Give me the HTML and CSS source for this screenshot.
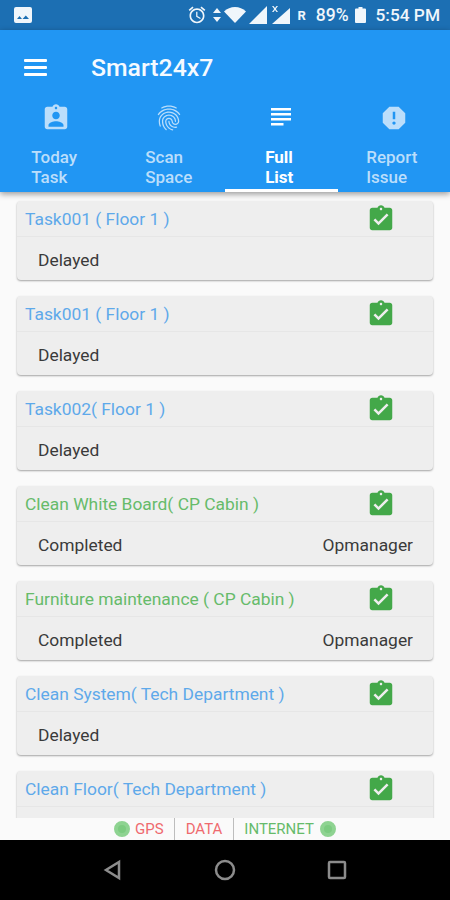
FILE: index.html
```html
<!DOCTYPE html>
<html lang="en">
<head>
    <meta charset="UTF-8">
    <meta name="viewport" content="width=device-width, initial-scale=1.0">
    <title>Smart24x7</title>
    <link rel="stylesheet" href="styles.css">
</head>
<body>
    <svg class="defs" width="0" height="0">
        <symbol id="task-done" viewBox="0 0 24 24">
            <path d="M19 3h-4.180C14.400 1.840 13.300 1 12 1c-1.300 0-2.400.84-2.820 2H5c-1.100 0-2 .9-2 2v14c0 1.100.9 2 2 2h14c1.100 0 2-.9 2-2V5c0-1.100-.9-2-2-2zm-7 0c.55 0 1 .45 1 1s-.45 1-1 1-1-.45-1-1 .45-1 1-1zm-2 14l-4-4 1.410-1.410L10 14.170l6.590-6.590L18 9l-8 8z"/>
        </symbol>
    </svg>

    <div class="status-bar">
        <svg class="status-photo" width="18" height="16" viewBox="0 0 18 16"><path d="M2 0h14a2 2 0 0 1 2 2v12a2 2 0 0 1-2 2H2a2 2 0 0 1-2-2V2a2 2 0 0 1 2-2zm1 12h5l-2.500-3zm5.500 0H15l-3.200-3.500z" fill-rule="evenodd"/></svg>
        <div class="status-right">
            <svg class="alarm" width="20" height="20" viewBox="0 0 24 24"><path d="M22 5.720l-4.600-3.860-1.290 1.530 4.600 3.860L22 5.720zM7.880 3.390L6.600 1.860 2 5.710l1.290 1.530 4.590-3.850zM12.500 8H11v6l4.750 2.850.75-1.230-4-2.370V8zM12 4c-4.970 0-9 4.030-9 9s4.030 9 9 9 9-4.030 9-9-4.030-9-9-9zm0 16c-3.870 0-7-3.130-7-7s3.130-7 7-7 7 3.130 7 7-3.130 7-7 7z"/></svg>
            <svg class="updown" width="8" height="16" viewBox="0 0 8 16"><path d="M4 1l4 5H0zM4 15L0 10h8z"/></svg>
            <svg class="wifi" width="22" height="16" viewBox="0 0 22 16"><path d="M11 16L0 4.500C3 1.600 6.800 0 11 0s8 1.600 11 4.500z"/></svg>
            <svg class="signal" width="18" height="18" viewBox="0 0 18 18"><path d="M18 0v18H0z"/></svg>
            <svg class="signal-x" width="19" height="18" viewBox="0 0 19 18"><path d="M19 2v16H1zM1 0l1.500 0L4 2l1.500-2H7L4.800 3 7 6H5.500L4 4 2.500 6H1l2.200-3z"/></svg>
            <span class="roaming">R</span>
            <span class="battery-pct">89%</span>
            <svg class="battery" width="11" height="16" viewBox="0 0 11 16"><path d="M3.500 0h4v1.500H10a1 1 0 0 1 1 1V15a1 1 0 0 1-1 1H1a1 1 0 0 1-1-1V2.500a1 1 0 0 1 1-1h2.500z"/></svg>
            <span class="clock">5:54 PM</span>
        </div>
    </div>

    <header class="app-bar">
        <div class="toolbar">
            <div class="menu-icon"><span></span><span></span><span></span></div>
            <div class="app-title">Smart24x7</div>
        </div>
        <nav class="tabs">
            <div class="tab">
                <svg width="30" height="30" viewBox="0 0 24 24"><path d="M19 3h-4.180C14.400 1.840 13.300 1 12 1c-1.300 0-2.400.84-2.820 2H5c-1.100 0-2 .9-2 2v14c0 1.100.9 2 2 2h14c1.100 0 2-.9 2-2V5c0-1.100-.9-2-2-2zm-7 0c.55 0 1 .45 1 1s-.45 1-1 1-1-.45-1-1 .45-1 1-1zm0 4c1.660 0 3 1.340 3 3s-1.340 3-3 3-3-1.340-3-3 1.340-3 3-3zm6 12H6v-1.400c0-2 4-3.100 6-3.100s6 1.100 6 3.100V19z"/></svg>
                <div class="tab-label">Today<br>Task</div>
            </div>
            <div class="tab scan">
                <svg width="30" height="30" viewBox="0 0 24 24"><path d="M17.810 4.470c-.08 0-.16-.02-.23-.06C15.660 3.420 14 3 12.010 3c-1.980 0-3.860.47-5.570 1.410-.24.13-.54.04-.68-.2-.13-.24-.04-.55.2-.68C7.820 2.520 9.860 2 12.010 2c2.130 0 3.990.47 6.030 1.520.25.13.34.43.21.67-.09.18-.26.28-.44.28zM3.500 9.720c-.1 0-.2-.03-.29-.09-.23-.16-.28-.47-.12-.7.99-1.400 2.250-2.500 3.750-3.270C9.980 4.040 14 4.030 17.150 5.650c1.500.77 2.760 1.860 3.750 3.250.16.22.11.54-.12.7-.23.16-.54.11-.7-.12-.9-1.260-2.040-2.250-3.390-2.940-2.870-1.470-6.540-1.470-9.400.01-1.360.7-2.500 1.700-3.400 2.960-.08.14-.23.21-.39.21zm6.250 12.070c-.13 0-.26-.05-.35-.15-.87-.87-1.340-1.430-2.010-2.640-.69-1.230-1.050-2.730-1.050-4.340 0-2.970 2.540-5.390 5.660-5.390s5.660 2.420 5.660 5.390c0 .28-.22.5-.5.5s-.5-.22-.5-.5c0-2.420-2.090-4.390-4.660-4.390-2.570 0-4.660 1.970-4.660 4.390 0 1.440.32 2.770.93 3.850.64 1.150 1.080 1.640 1.850 2.420.19.2.19.51 0 .71-.11.1-.24.15-.37.15zm7.170-1.850c-1.190 0-2.240-.3-3.100-.89-1.490-1.010-2.380-2.650-2.380-4.390 0-.28.22-.5.5-.5s.5.22.5.5c0 1.410.72 2.740 1.940 3.560.71.48 1.540.71 2.540.71.24 0 .64-.03 1.040-.1.27-.05.53.13.58.41.05.27-.13.53-.41.58-.57.11-1.070.12-1.210.12zM14.910 22c-.04 0-.09-.01-.13-.02-1.590-.44-2.630-1.030-3.720-2.100-1.400-1.390-2.170-3.240-2.170-5.220 0-1.620 1.380-2.940 3.080-2.940 1.700 0 3.080 1.320 3.080 2.940 0 1.070.93 1.940 2.080 1.940s2.080-.87 2.080-1.940c0-3.770-3.250-6.830-7.250-6.830-2.840 0-5.440 1.580-6.610 4.030-.39.81-.59 1.760-.59 2.800 0 .78.07 2.010.67 3.610.1.26-.03.55-.29.64-.26.1-.55-.04-.64-.29-.49-1.310-.73-2.610-.73-3.960 0-1.200.23-2.290.68-3.240 1.330-2.790 4.280-4.600 7.510-4.600 4.550 0 8.250 3.510 8.250 7.830 0 1.620-1.380 2.940-3.080 2.940s-3.080-1.320-3.080-2.940c0-1.070-.93-1.940-2.080-1.940s-2.080.87-2.080 1.940c0 1.710.66 3.310 1.870 4.510.95.94 1.860 1.460 3.270 1.850.27.07.42.35.35.61-.05.23-.26.38-.47.38z"/></svg>
                <div class="tab-label">Scan<br>Space</div>
            </div>
            <div class="tab active">
                <svg width="30" height="30" viewBox="0 0 24 24"><path d="M4 4h16v2H4zM4 8h16v2H4zM4 12h16v2H4zM4 16h10v2H4z"/></svg>
                <div class="tab-label">Full<br>List</div>
            </div>
            <div class="tab">
                <svg width="30" height="30" viewBox="0 0 24 24"><path d="M15.730 3H8.270L3 8.270v7.460L8.270 21h7.460L21 15.730V8.270L15.730 3zM12 17.300c-.72 0-1.300-.58-1.300-1.300 0-.72.58-1.300 1.300-1.300.72 0 1.300.58 1.300 1.300 0 .72-.58 1.300-1.300 1.300zm1-4.300h-2V7h2v6z"/></svg>
                <div class="tab-label">Report<br>Issue</div>
            </div>
        </nav>
    </header>

    <main class="task-list">
        <div class="card">
            <div class="card-head">
                <span class="card-title blue">Task001 ( Floor 1 )</span>
                <svg class="done-icon" width="30" height="30"><use href="#task-done"/></svg>
            </div>
            <div class="card-body"><span>Delayed</span></div>
        </div>
        <div class="card">
            <div class="card-head">
                <span class="card-title blue">Task001 ( Floor 1 )</span>
                <svg class="done-icon" width="30" height="30"><use href="#task-done"/></svg>
            </div>
            <div class="card-body"><span>Delayed</span></div>
        </div>
        <div class="card">
            <div class="card-head">
                <span class="card-title blue">Task002( Floor 1 )</span>
                <svg class="done-icon" width="30" height="30"><use href="#task-done"/></svg>
            </div>
            <div class="card-body"><span>Delayed</span></div>
        </div>
        <div class="card">
            <div class="card-head">
                <span class="card-title green">Clean White Board( CP Cabin )</span>
                <svg class="done-icon" width="30" height="30"><use href="#task-done"/></svg>
            </div>
            <div class="card-body"><span>Completed</span><span>Opmanager</span></div>
        </div>
        <div class="card">
            <div class="card-head">
                <span class="card-title green">Furniture maintenance ( CP Cabin )</span>
                <svg class="done-icon" width="30" height="30"><use href="#task-done"/></svg>
            </div>
            <div class="card-body"><span>Completed</span><span>Opmanager</span></div>
        </div>
        <div class="card">
            <div class="card-head">
                <span class="card-title blue">Clean System( Tech Department )</span>
                <svg class="done-icon" width="30" height="30"><use href="#task-done"/></svg>
            </div>
            <div class="card-body"><span>Delayed</span></div>
        </div>
        <div class="card">
            <div class="card-head">
                <span class="card-title blue">Clean Floor( Tech Department )</span>
                <svg class="done-icon" width="30" height="30"><use href="#task-done"/></svg>
            </div>
            <div class="card-body"></div>
        </div>
    </main>

    <div class="conn-bar">
        <span class="conn-dot"></span>
        <span class="conn-item red gps">GPS</span>
        <span class="conn-item red data">DATA</span>
        <span class="conn-item green internet">INTERNET</span>
        <span class="conn-dot"></span>
    </div>

    <div class="nav-bar">
        <svg width="22" height="22" viewBox="0 0 22 22"><path d="M17 3v16L4 11z"/></svg>
        <svg width="22" height="22" viewBox="0 0 22 22"><circle cx="11" cy="11" r="9"/></svg>
        <svg width="22" height="22" viewBox="0 0 22 22"><rect x="3" y="3" width="16" height="16" rx="1"/></svg>
    </div>
</body>
</html>
```

FILE: styles.css
```css
* {
    box-sizing: border-box;
}

body {
    margin: 0;
    width: 450px;
    height: 900px;
    display: flex;
    flex-direction: column;
    overflow: hidden;
    background-color: #fafafa;
    font-family: 'Roboto', sans-serif;
}

.defs {
    position: absolute;
}

.status-bar {
    height: 30px;
    flex: none;
    display: flex;
    justify-content: space-between;
    align-items: center;
    padding: 0 10px 0 14px;
    background-color: #1c6fb3;
    color: #f0f6fb;
}

.status-bar svg {
    fill: #f0f6fb;
    display: block;
}

.status-right {
    display: flex;
    align-items: center;
}

.updown {
    margin-left: 6px;
}

.wifi {
    margin-left: 3px;
}

.signal {
    margin-left: 3px;
}

.signal-x {
    margin-left: 4px;
}

.roaming {
    margin-left: 7px;
    font-size: 13px;
    font-weight: 700;
}

.battery-pct {
    margin-left: 10px;
    font-size: 17.500px;
    font-weight: 500;
}

.battery {
    margin-left: 6px;
}

.clock {
    margin-left: 10px;
    font-size: 17.300px;
    font-weight: 500;
}

.app-bar {
    flex: none;
    height: 162px;
    background-color: #2196f3;
    box-shadow: 0 2px 6px rgba(0, 0, 0, 0.4);
    position: relative;
    z-index: 2;
    display: flex;
    flex-direction: column;
}

.toolbar {
    height: 68px;
    flex: none;
    display: flex;
    align-items: center;
    padding: 6px 0 0 24px;
}

.menu-icon {
    width: 23px;
    display: flex;
    flex-direction: column;
    gap: 4px;
}

.menu-icon span {
    height: 3px;
    background-color: #fff;
    border-radius: 1px;
}

.app-title {
    margin-left: 44px;
    font-size: 24.800px;
    font-weight: 500;
    color: #f5faff;
}

.tabs {
    flex: 1;
    display: flex;
}

.tab {
    width: 25%;
    display: flex;
    flex-direction: column;
    align-items: center;
    color: #bbdefb;
    fill: #bbdefb;
    border-bottom: 3px solid transparent;
}

.tab svg {
    display: block;
    margin-top: 5px;
}

.tab-label {
    margin-top: 14px;
    margin-right: 4px;
    font-size: 17px;
    font-weight: 500;
    line-height: 20px;
}

.scan .tab-label {
    margin-right: 0;
}

.tab.active {
    color: #fff;
    fill: #fff;
    border-bottom-color: #fff;
}

.tab.active .tab-label {
    font-weight: 700;
}

.task-list {
    flex: 1;
    min-height: 0;
    overflow: hidden;
    padding: 9px 17px 0;
    display: flex;
    flex-direction: column;
    gap: 16px;
}

.card {
    height: 79px;
    flex: none;
    background-color: #eeeeee;
    border-radius: 4px;
    box-shadow: 0 1px 2px rgba(0, 0, 0, 0.35);
}

.card-head {
    height: 36px;
    display: flex;
    justify-content: space-between;
    align-items: center;
    padding: 0 37px 0 8px;
    border-bottom: 1px solid #e6e6e6;
}

.card-title {
    font-size: 17.400px;
}

.blue {
    color: #5ea9ea;
}

.green {
    color: #66bb6a;
}

.done-icon {
    fill: #43a849;
    display: block;
}

.card-body {
    height: 43px;
    display: flex;
    justify-content: space-between;
    align-items: center;
    padding: 3px 20px 0 21px;
    font-size: 17.400px;
    color: #3a3a3a;
}

.conn-bar {
    flex: none;
    height: 22px;
    position: relative;
    z-index: 1;
    display: flex;
    justify-content: center;
    align-items: center;
    background-color: #fafafa;
    font-size: 15px;
}

.conn-dot {
    width: 16px;
    height: 16px;
    border-radius: 50%;
    background-color: #7ccb80;
    border: 4px solid #8ed391;
}

.conn-item {
    height: 22px;
    line-height: 23px;
}

.red {
    color: #ef6a6f;
}

.gps {
    padding: 0 10px 0 5px;
    border-right: 1px solid #bdbdbd;
}

.data {
    padding: 0 11px;
    border-right: 1px solid #bdbdbd;
}

.internet {
    padding: 0 6px 0 10px;
}

.nav-bar {
    flex: none;
    height: 60px;
    background-color: #000;
    display: flex;
    justify-content: center;
    align-items: center;
    gap: 90px;
}

.nav-bar svg {
    fill: none;
    stroke: #8c8c8c;
    stroke-width: 2.500;
    display: block;
}
```
